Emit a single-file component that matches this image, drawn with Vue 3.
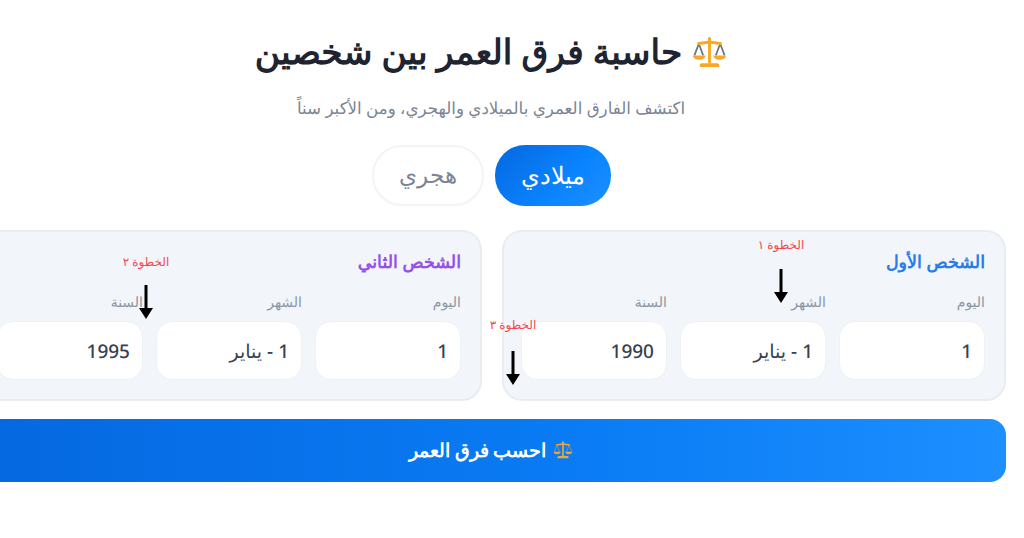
<template>
    <div class="page" dir="rtl">
        <h1 class="title">
            <svg class="scale-icon" viewBox="0 0 36 36">
                <path d="M7 9 2.500 21M7 9l4.500 12M29 9l-4.500 12M29 9l4.500 12" stroke="#6b7785" stroke-width="1.800" fill="none" />
                <path d="M16.500 3.500a1.500 1.500 0 0 1 3 0V6l11 1.500v3L19.500 9v20h-3V9L5.500 10.500v-3L16.500 6z" fill="#f9a825" />
                <path d="M1 21h13c-.5 6-12.500 6-13 0zM22 21h13c-.5 6-12.500 6-13 0z" fill="#f9a825" />
                <path d="M10 29h16a2 2 0 0 1 2 2v2H8v-2a2 2 0 0 1 2-2z" fill="#f9a825" />
            </svg>
            <span>حاسبة فرق العمر بين شخصين</span>
        </h1>
        <p class="subtitle">اكتشف الفارق العمري بالميلادي والهجري، ومن الأكبر سناً</p>

        <div class="tabs">
            <button class="tab active">ميلادي</button>
            <button class="tab">هجري</button>
        </div>

        <div class="people">
            <section v-for="p in people" :key="p.title" class="card">
                <h2 class="card-title" :class="p.color">{{ p.title }}</h2>
                <div class="fields">
                    <div class="field">
                        <label>اليوم</label>
                        <div class="box">1</div>
                    </div>
                    <div class="field">
                        <label>الشهر</label>
                        <div class="box">1 - يناير</div>
                    </div>
                    <div class="field">
                        <label>السنة</label>
                        <div class="box">{{ p.year }}</div>
                    </div>
                </div>
            </section>
        </div>

        <button class="calc">
            <svg class="calc-icon" viewBox="0 0 36 36">
                <path d="M7 9 2.500 21M7 9l4.500 12M29 9l-4.500 12M29 9l4.500 12" stroke="#8a8f80" stroke-width="1.800" fill="none" />
                <path d="M16.500 3.500a1.500 1.500 0 0 1 3 0V6l11 1.500v3L19.500 9v20h-3V9L5.500 10.500v-3L16.500 6z" fill="#eca63a" />
                <path d="M1 21h13c-.5 6-12.500 6-13 0zM22 21h13c-.5 6-12.500 6-13 0z" fill="#eca63a" />
                <path d="M10 29h16a2 2 0 0 1 2 2v2H8v-2a2 2 0 0 1 2-2z" fill="#eca63a" />
            </svg>
            <span>احسب فرق العمر</span>
        </button>

        <div class="note step1">
            <span>الخطوة ١</span>
            <svg class="arrow" viewBox="0 0 14 34"><path d="M5.500 0h3v23H14L7 34 0 23h5.500z" fill="#000" /></svg>
        </div>
        <div class="note step2">
            <span>الخطوة ٢</span>
            <svg class="arrow" viewBox="0 0 14 34"><path d="M5.500 0h3v23H14L7 34 0 23h5.500z" fill="#000" /></svg>
        </div>
        <div class="note step3">
            <span>الخطوة ٣</span>
            <svg class="arrow" viewBox="0 0 14 34"><path d="M5.500 0h3v23H14L7 34 0 23h5.500z" fill="#000" /></svg>
        </div>
    </div>
</template>

<script setup>
const people = [
    { title: "الشخص الأول", color: "blue", year: 1990 },
    { title: "الشخص الثاني", color: "purple", year: 1995 },
];
</script>

<style>
html,
body {
    background: #fff;
    overflow: hidden;
}
</style>

<style scoped>
.page {
    position: relative;
    width: 1024px;
    height: 538px;
    overflow: hidden;
    box-sizing: border-box;
    padding: 28px 18px 0 0;
    font-family: "Noto Sans", "Noto Sans CJK SC", sans-serif;
    color: #1f2937;
    text-rendering: geometricPrecision;
}

.title {
    width: 1030px;
    margin: 0;
    display: flex;
    justify-content: center;
    align-items: center;
    gap: 10px;
    font-size: 34.500px;
    line-height: 48px;
    font-weight: 700;
    color: #1f2430;
}

.scale-icon {
    width: 35px;
    height: 35px;
}

.subtitle {
    width: 1030px;
    margin: 20px 0 0;
    text-align: center;
    font-size: 16.700px;
    line-height: 24px;
    color: #7b8594;
}

.tabs {
    width: 1030px;
    margin-top: 25px;
    display: flex;
    justify-content: center;
    gap: 11px;
}

.tab {
    width: 112px;
    height: 61px;
    padding: 0 0 3px;
    border-radius: 30px;
    border: 2px solid #f2f4f6;
    background: #fff;
    color: #7b8594;
    font: 400 23px "Noto Sans", sans-serif;
}

.tab.active {
    width: 116px;
    border: none;
    color: #fff;
    font-size: 24px;
    background: linear-gradient(135deg, #0568e0, #0a84ff 60%, #1e8fff);
}

.people {
    margin-top: 24px;
    display: flex;
    gap: 20px;
    width: 1030px;
}

.card {
    flex: 0 0 504px;
    box-sizing: border-box;
    height: 171px;
    padding: 18px 19px 19px 17px;
    background: #f2f5fa;
    border: 2px solid #e9edf2;
    border-radius: 20px;
}

.card-title {
    margin: 0;
    font-size: 17.500px;
    line-height: 24px;
    font-weight: 700;
}

.card-title.blue {
    color: #2a7de9;
}

.card-title.purple {
    color: #9550ee;
}

.fields {
    margin-top: 20px;
    display: grid;
    grid-template-columns: repeat(3, 146px);
    gap: 13px;
}

.field label {
    display: block;
    font-size: 14px;
    line-height: 18px;
    color: #8b95a3;
}

.box {
    box-sizing: border-box;
    margin-top: 9px;
    height: 59px;
    padding: 0 12px;
    display: flex;
    align-items: center;
    background: #fff;
    border: 1px solid #eef1f5;
    border-radius: 16px;
    font-size: 19px;
    font-weight: 500;
    color: #374151;
}

.calc {
    display: flex;
    justify-content: center;
    align-items: center;
    gap: 7px;
    width: 1030px;
    height: 63px;
    margin-top: 18px;
    padding: 0 0 2px;
    border: none;
    border-radius: 16px;
    background: linear-gradient(90deg, #0568e0, #0a7cf5 60%, #1e8fff);
    color: #fff;
    font: 700 19px "Noto Sans", sans-serif;
}

.calc-icon {
    width: 20px;
    height: 20px;
}

.note {
    position: absolute;
    display: flex;
    flex-direction: column;
    align-items: center;
    width: 48px;
    color: #f4474b;
    font-size: 12px;
    line-height: 16px;
    white-space: nowrap;
}

.arrow {
    width: 14px;
    height: 34px;
}

.step1 {
    left: 757px;
    top: 237px;
}

.step1 .arrow {
    margin-top: 16px;
}

.step2 {
    left: 122px;
    top: 254px;
}

.step2 .arrow {
    margin-top: 15px;
}

.step3 {
    left: 489px;
    top: 317px;
}

.step3 .arrow {
    margin-top: 18px;
}
</style>
